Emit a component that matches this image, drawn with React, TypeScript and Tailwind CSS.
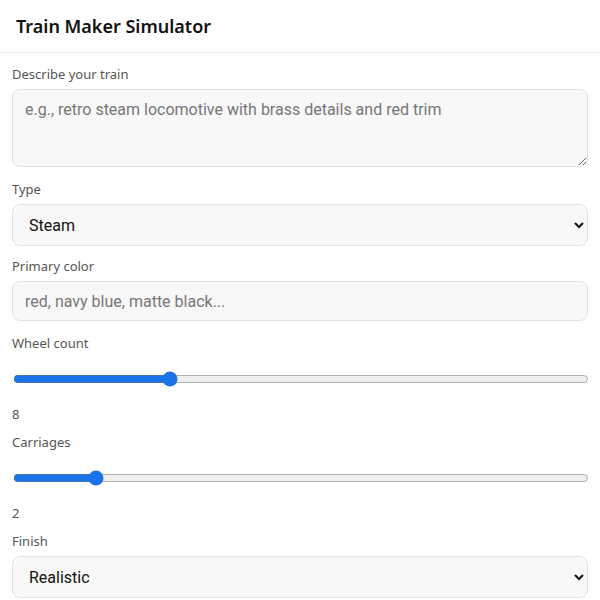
import React, { useState } from 'react';

const labelClass = "block text-[13px] leading-[18px] text-[#555]";
const fieldClass =
  "block w-full rounded-lg border border-[#e3e3e3] bg-[#f8f8f8] px-3 text-base text-[#111] font-['Roboto',sans-serif] placeholder:text-[#777] outline-none";
const rangeClass = "block w-full h-4 ml-px mt-[19px] mb-[18px] accent-[#1a73e8]";

export default function App() {
  const [description, setDescription] = useState('');
  const [type, setType] = useState('steam');
  const [color, setColor] = useState('');
  const [wheels, setWheels] = useState(8);
  const [carriages, setCarriages] = useState(2);
  const [finish, setFinish] = useState('realistic');

  return (
    <div className="min-h-screen bg-white font-['Noto_Sans',sans-serif] text-[#111]">
      <header className="h-[53px] flex items-center px-4 border-b border-[#e8e8e8]">
        <h1 className="text-lg font-semibold">Train Maker Simulator</h1>
      </header>

      <form className="px-3 pt-3" onSubmit={(e) => e.preventDefault()}>
        {/* Description */}
        <label className={labelClass}>Describe your train</label>
        <textarea
          value={description}
          onChange={(e) => setDescription(e.target.value)}
          placeholder="e.g., retro steam locomotive with brass details and red trim"
          className={`${fieldClass} mt-1.5 h-[78px] py-2.5 leading-5`}
        />

        {/* Type */}
        <label className={`${labelClass} mt-[13px]`}>Type</label>
        <select
          value={type}
          onChange={(e) => setType(e.target.value)}
          className={`${fieldClass} mt-1.5 h-[42px]`}
        >
          <option value="steam">Steam</option>
          <option value="diesel">Diesel</option>
          <option value="electric">Electric</option>
          <option value="maglev">Maglev</option>
        </select>

        {/* Primary color */}
        <label className={`${labelClass} mt-[11px]`}>Primary color</label>
        <input
          value={color}
          onChange={(e) => setColor(e.target.value)}
          placeholder="red, navy blue, matte black..."
          className={`${fieldClass} mt-1.5 h-10`}
        />

        {/* Wheel count */}
        <label className={`${labelClass} mt-[13px]`}>Wheel count</label>
        <input
          type="range"
          min={0}
          max={30}
          value={wheels}
          onChange={(e) => setWheels(Number(e.target.value))}
          className={rangeClass}
        />
        <div className={labelClass}>{wheels}</div>

        {/* Carriages */}
        <label className={`${labelClass} mt-[10px]`}>Carriages</label>
        <input
          type="range"
          min={0}
          max={15}
          value={carriages}
          onChange={(e) => setCarriages(Number(e.target.value))}
          className={rangeClass}
        />
        <div className={labelClass}>{carriages}</div>

        {/* Finish */}
        <label className={`${labelClass} mt-[10px]`}>Finish</label>
        <select
          value={finish}
          onChange={(e) => setFinish(e.target.value)}
          className={`${fieldClass} mt-1.5 h-[42px]`}
        >
          <option value="realistic">Realistic</option>
          <option value="toy">Toy</option>
          <option value="cartoon">Cartoon</option>
        </select>
      </form>
    </div>
  );
}
